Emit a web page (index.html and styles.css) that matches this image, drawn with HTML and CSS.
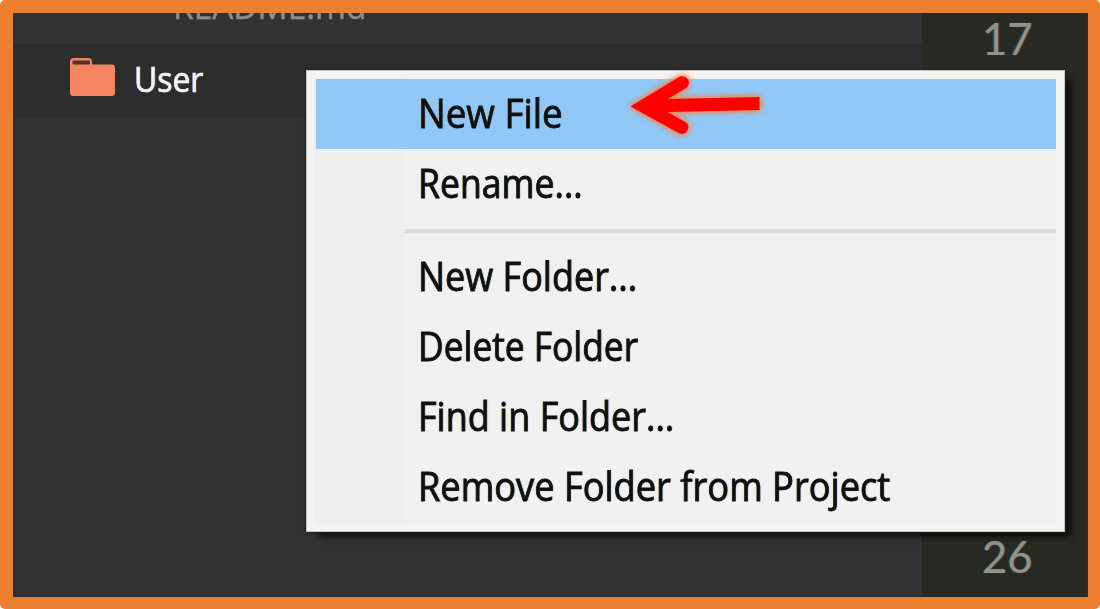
FILE: index.html
```html
<!DOCTYPE html>
<html lang="en">
<head>
<meta charset="utf-8">
<title>Project folder menu</title>
<link rel="stylesheet" href="styles.css">
</head>
<body>
<div class="frame">
  <div class="editor">
    <div class="sidebar">
      <div class="file-row"><span class="file-name">README.md</span></div>
      <div class="folder-row">
        <svg class="folder-icon" viewBox="0 0 46 41" width="46" height="41">
          <path d="M0 5Q0 1 4 1H18Q22 1 22 5V7.500H42Q45 7.500 45 10.500V36Q45 39 42 39H3Q0 39 0 36Z" fill="#f48462"/>
          <rect x="2.500" y="3.500" width="17.500" height="4" rx="1" fill="#4a3530"/>
        </svg>
        <span class="folder-name">User</span>
      </div>
    </div>
    <div class="gutter"><span class="line-number">17</span><span class="line-number">26</span></div>
  </div>
</div>
<div class="menu">
  <div class="item active"><span class="label new-file">New File</span></div>
  <div class="item"><span class="label rename">Rename...</span></div>
  <div class="separator"></div>
  <div class="item"><span class="label new-folder">New Folder...</span></div>
  <div class="item"><span class="label delete">Delete Folder</span></div>
  <div class="item"><span class="label find">Find in Folder...</span></div>
  <div class="item"><span class="label remove">Remove Folder from Project</span></div>
</div>
<svg class="arrow" viewBox="0 0 160 90" width="160" height="90">
  <path d="M10.500 46.500L59 17A6.500 6.500 0 0 1 65.500 28.500L47.500 39L139.500 37V50L47.500 52L66 62.500A6.500 6.500 0 0 1 59.500 73.500Z" fill="#f00"/>
</svg>
</body>
</html>
```
FILE: styles.css
```css
* { box-sizing: border-box; }
body {
  margin: 0;
  width: 1100px;
  height: 609px;
  overflow: hidden;
  background: #fff;
  font-family: "Open Sans", "Noto Sans", sans-serif;
}
.frame {
  height: 609px;
  padding: 12.5px 12.5px 12.5px 13px;
  background: #ee7f30;
  border-radius: 5px;
}
.editor {
  height: 584px;
  display: flex;
  overflow: hidden;
}
.sidebar {
  width: 909px;
  background: #333;
  box-shadow: inset 2px 0 #293238, inset 0 2px #293238, inset 0 -2px #293238;
}
.file-row {
  height: 31px;
  padding-left: 160px;
  display: flex;
  align-items: flex-start;
}
.file-name {
  color: #8c8c8c;
  font-size: 35px;
  line-height: 48px;
  margin-top: -31px;
  transform-origin: left;
  transform: scaleX(.955);
  -webkit-text-stroke: .5px #8c8c8c;
}
.folder-row {
  height: 74px;
  padding-left: 57px;
  display: flex;
  align-items: center;
  background: #2d2d2d;
}
.folder-icon { margin-top: -7px; }
.folder-name {
  margin-left: 18px;
  margin-top: -4px;
  color: #f4f4f4;
  font-size: 35px;
  line-height: 48px;
  transform-origin: left;
  transform: scaleX(.91);
  -webkit-text-stroke: .7px #f4f4f4;
  text-shadow: -1px 0 1px #1d3f8c, 1px 0 1px #8a6238;
}
.gutter {
  flex: 1;
  display: flex;
  flex-direction: column;
  justify-content: space-between;
  align-items: flex-end;
  padding: 0 55px 16px 0;
  background: #282923;
  box-shadow: inset -2px 0 #22302f, inset 0 2px #222c27, inset 0 -2px #222c27;
}
.line-number {
  color: #92938d;
  font: 43.500px/50px Lato, sans-serif;
  text-shadow: -1px 0 1px #28506a, 1px 0 1px #6a4028;
}
.menu {
  position: absolute;
  left: 306px;
  top: 70px;
  width: 759px;
  height: 462px;
  padding: 9px 9px 9px 10px;
  background: linear-gradient(90deg, #f1f1f1 8px, #efefef 8px, #efefef 99px, #f1f1f1 99px);
  box-shadow: inset 0 0 0 1px #c4c4c4, inset 0 0 0 8px #f5f3f2, 0 0 2px 1px #222, 9px 7px 7px -3px #080808;
}
.item {
  height: 70.300px;
  padding-left: 102px;
  color: #101010;
  font-size: 40px;
  line-height: 68px;
  white-space: nowrap;
}
.active { background: #91c8f7; }
.label {
  display: inline-block;
  transform-origin: left;
  transform: scaleX(.9);
  -webkit-text-stroke: .8px #101010;
  text-shadow: -1px 0 1px #e0b26080, 1px 0 1px #50a0e880;
}
.new-file { transform: scaleX(.92); }
.rename { transform: scaleX(.89); }
.delete { transform: scaleX(.883); }
.remove { transform: scaleX(.906); }
.separator {
  height: 22px;
  margin-left: 89px;
  padding: 9px 0;
  background: #dcdcdc content-box;
}
.arrow {
  position: absolute;
  left: 620px;
  top: 60px;
  filter: drop-shadow(0 0 3px #ee8850) drop-shadow(0 0 1.500px #ee8850);
}
```
